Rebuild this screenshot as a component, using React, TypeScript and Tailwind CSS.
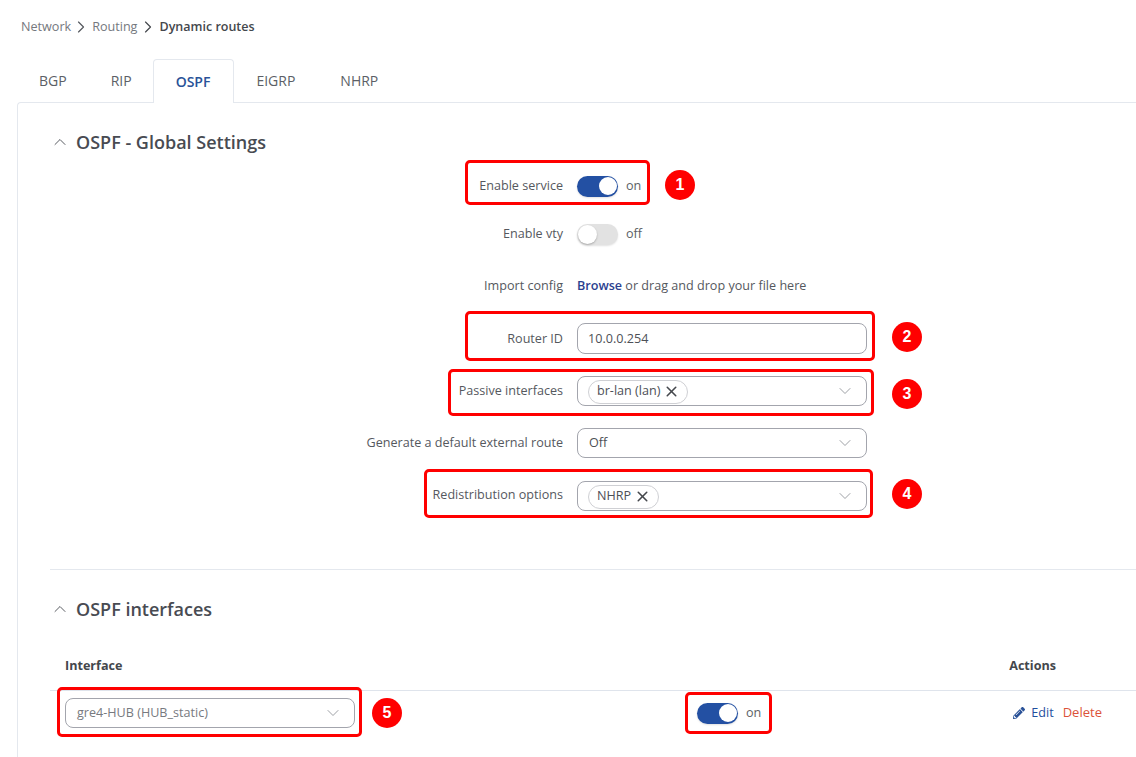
import { ChevronDown, ChevronRight, ChevronUp, X } from "lucide-react";
import { FaPencilAlt } from "react-icons/fa";
import type { ReactNode } from "react";

const tabs = ["BGP", "RIP", "OSPF", "EIGRP", "NHRP"];

function Toggle({ on }: { on: boolean }) {
  return (
    <div className="flex items-center gap-[8px]">
      {on ? (
        <div className="flex h-[21px] w-[41px] items-center justify-end rounded-full bg-[#2350a3] pr-[1px] shadow-[0_1px_2px_rgba(0,0,0,0.12)]">
          <div className="h-[18px] w-[18px] rounded-full bg-white" />
        </div>
      ) : (
        <div className="flex h-[21px] w-[41px] items-center rounded-full bg-[#e2e2e2] pl-[1px] shadow-[0_1px_2px_rgba(0,0,0,0.12)]">
          <div className="h-[19px] w-[19px] rounded-full bg-white shadow-[0_1px_2px_rgba(0,0,0,0.25)]" />
        </div>
      )}
      <span className="text-[12.6px] text-[#5c5f66]">{on ? "on" : "off"}</span>
    </div>
  );
}

function Row({ label, className, labelClassName = "", children }: { label: string; className: string; labelClassName?: string; children: ReactNode }) {
  return (
    <div className={`flex h-[32px] items-center ${className}`}>
      <div className={`w-[563px] text-right text-[12.6px] text-[#55585e] ${labelClassName}`}>{label}</div>
      <div className="ml-[14px] w-[290px]">{children}</div>
    </div>
  );
}

function SelectBox({ children, muted }: { children: ReactNode; muted?: boolean }) {
  return (
    <div className={`flex h-[30px] w-[290px] items-center justify-between rounded-[8px] border border-[#a3a5ad] bg-white pr-[11px] text-[12.6px] ${muted ? "text-[#777a80]" : "text-[#4d5056]"}`}>
      {children}
      <ChevronDown size={20} strokeWidth={1.1} className="text-[#94979d]" />
    </div>
  );
}

function Chip({ text }: { text: string }) {
  return (
    <div className="mt-[1px] ml-[10px] flex h-[24px] items-center gap-[3px] rounded-full border border-[#cfd0d4] pr-[7px] pl-[8px] text-[12.6px] text-[#4d5056]">
      {text}
      <X size={17} strokeWidth={2.2} className="text-[#44474c]" />
    </div>
  );
}

function SectionTitle({ title }: { title: string }) {
  return (
    <div className="flex items-center gap-[6px] text-[18px] leading-[24px] font-semibold text-[#484b52]">
      <ChevronUp size={20} strokeWidth={1.2} className="text-[#5a5d63]" />
      {title}
    </div>
  );
}

function Badge({ n, className }: { n: number; className: string }) {
  return (
    <div className={`absolute flex h-[30px] w-[30px] items-center justify-center rounded-full bg-[#ff0000] font-['Liberation_Sans',sans-serif] text-[16px] font-bold text-white ${className}`}>
      {n}
    </div>
  );
}

// red callouts drawn on top of the screenshot
function Marks() {
  return (
    <>
      <div className="absolute top-[160px] left-[465px] h-[45px] w-[185px] rounded-[5px] border-[3px] border-[#ff0000]" />
      <div className="absolute top-[311px] left-[465px] h-[50px] w-[410px] rounded-[5px] border-[3px] border-[#ff0000]" />
      <div className="absolute top-[369px] left-[448px] h-[47px] w-[426px] rounded-[5px] border-[3px] border-[#ff0000]" />
      <div className="absolute top-[469px] left-[424px] h-[49px] w-[449px] rounded-[5px] border-[3px] border-[#ff0000]" />
      <div className="absolute top-[687px] left-[57px] h-[50px] w-[305px] rounded-[5px] border-[3px] border-[#ff0000]" />
      <div className="absolute top-[692px] left-[685px] h-[42px] w-[87px] rounded-[5px] border-[3px] border-[#ff0000]" />
      <Badge n={1} className="top-[170px] left-[665px]" />
      <Badge n={2} className="top-[322px] left-[892px]" />
      <Badge n={3} className="top-[379px] left-[892px]" />
      <Badge n={4} className="top-[479px] left-[892px]" />
      <Badge n={5} className="top-[698px] left-[372px]" />
    </>
  );
}

export default function App() {
  return (
    <div className="relative h-[757px] w-[1136px] overflow-hidden bg-white font-['Open_Sans',sans-serif]">
      <div className="flex h-[59px] items-center pb-[5px] pl-[21px] text-[12.6px] text-[#75787e]">
        <span>Network</span>
        <ChevronRight size={20} strokeWidth={1.4} className="mr-px text-[#55585e]" />
        <span>Routing</span>
        <ChevronRight size={20} strokeWidth={1.4} className="mx-px text-[#44474c]" />
        <span className="text-[12.5px] font-semibold text-[#44474c]">Dynamic routes</span>
      </div>

      <div className="ml-[17px] flex h-[44px] text-[14px]">
        {tabs.map((t) =>
          t === "OSPF" ? (
            <div key={t} className="z-10 -ml-px flex h-[44px] items-center rounded-t-[4px] border border-b-0 border-[#e4e8ee] bg-white pr-[23px] pl-[22px] font-semibold text-[#2a5298]">
              {t}
            </div>
          ) : (
            <div key={t} className={`flex h-[43px] items-center text-[#5c5f66] ${t === "EIGRP" ? "pr-[23px] pl-[22px]" : "px-[22px]"}`}>
              {t}
            </div>
          ),
        )}
      </div>

      <div className="-mt-px ml-[17px] h-[660px] rounded-tl-[4px] border-t border-l border-[#e4e8ee]">
        <div className="pt-[27px] pl-[32px]">
          <SectionTitle title="OSPF - Global Settings" />
        </div>

        <div className="-ml-[18px]">
          <Row label="Enable service" className="mt-[16px]">
            <Toggle on />
          </Row>
          <Row label="Enable vty" className="mt-[16px]">
            <Toggle on={false} />
          </Row>
          <Row label="Import config" className="mt-[20px]">
            <div className="text-[12.6px] text-[#55585e]">
              <span className="font-semibold text-[#2b3f8f]">Browse</span> or drag and drop your file here
            </div>
          </Row>
          <Row label="Router ID" className="mt-[20px]" labelClassName="pt-[2px]">
            <div className="flex h-[31px] w-[290px] items-center rounded-[8px] border border-[#a3a5ad] pt-[2px] pl-[10px] text-[12.6px] text-[#4d5056]">
              10.0.0.254
            </div>
          </Row>
          <Row label="Passive interfaces" className="mt-[21px]">
            <SelectBox>
              <Chip text="br-lan (lan)" />
            </SelectBox>
          </Row>
          <Row label="Generate a default external route" className="mt-[20px]">
            <SelectBox>
              <span className="pl-[11px]">Off</span>
            </SelectBox>
          </Row>
          <Row label="Redistribution options" className="mt-[21px]" labelClassName="pb-[2px]">
            <SelectBox>
              <Chip text="NHRP" />
            </SelectBox>
          </Row>
        </div>

        <div className="mt-[57px] ml-[32px] border-t border-[#e4e8ee]" />

        <div className="pt-[27px] pl-[32px]">
          <SectionTitle title="OSPF interfaces" />
        </div>

        <div className="mt-[31px] ml-[32px]">
          <div className="flex h-[39px] items-center justify-between border-b border-[#dfe4ec] pb-[10px] pl-[15px] text-[12.6px] font-bold text-[#44474c]">
            <span>Interface</span>
            <span className="mr-[80px]">Actions</span>
          </div>
          <div className="flex h-[44px] items-center pl-[15px]">
            <SelectBox muted>
              <span className="pl-[11px]">gre4-HUB (HUB_static)</span>
            </SelectBox>
            <div className="ml-[342px]">
              <Toggle on />
            </div>
            <div className="ml-[252px] flex items-center text-[12.6px] font-medium">
              <FaPencilAlt size={12} className="text-[#2a5298]" />
              <span className="ml-[6px] text-[#1f4f9e]">Edit</span>
              <span className="ml-[9px] text-[13px] text-[#dc5239]">Delete</span>
            </div>
          </div>
        </div>
      </div>

      <Marks />
    </div>
  );
}
